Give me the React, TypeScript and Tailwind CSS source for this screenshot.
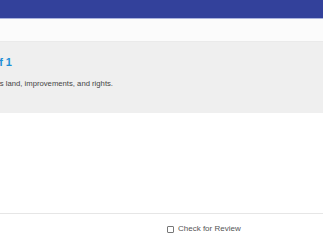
import React from "react";

export default function App() {
  return (
    <div className="w-[323px] h-[243px] overflow-hidden bg-white flex flex-col" style={{ fontFamily: '"Liberation Sans", Arial, sans-serif' }}>
      <div className="h-[19px] bg-[#33419b] border-b border-[#aab2dd] shrink-0" />
      <div className="h-[23px] bg-[#fbfbfb] border-b border-[#eaeaea] shrink-0" />
      <div className="h-[71px] bg-[#efefef] shrink-0 flex flex-col pt-[14px]">
        <div className="w-[12px] flex justify-end whitespace-nowrap">
          <span className="text-[11px] leading-[13px] font-bold text-[#1f8fd6]">Question 1 of 1</span>
        </div>
        <div className="w-[113px] flex justify-end whitespace-nowrap mt-[10px]">
          <span className="text-[7.7px] leading-[10px] text-[#444]">Real property includes land, improvements, and rights.</span>
        </div>
      </div>
      <div className="h-[101px] bg-white border-b border-[#e6e6e6] shrink-0" />
      <div className="flex items-center pl-[167px] pt-[10px] gap-[4px]">
        <span className="w-[7px] h-[7px] border border-[#777] rounded-[1px] bg-white" />
        <span className="text-[8px] leading-[10px] text-[#555]">Check for Review</span>
      </div>
    </div>
  );
}
